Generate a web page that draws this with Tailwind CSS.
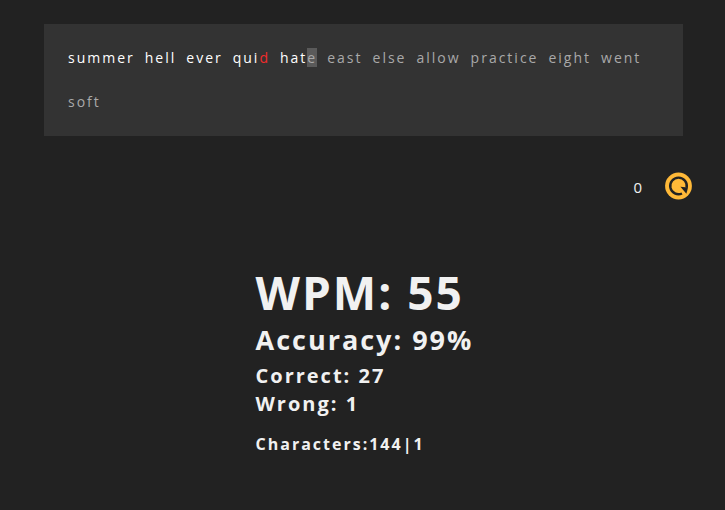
<!DOCTYPE html>
<html lang="en">
<head>
<meta charset="utf-8">
<meta name="viewport" content="width=device-width, initial-scale=1">
<title>Typing test</title>
<script src="https://cdn.jsdelivr.net/npm/@tailwindcss/browser@4"></script>
</head>
<body class="min-h-screen bg-[#222222] font-['Open_Sans',sans-serif] text-[#f1f1f1]">
<main class="px-8 pt-6">
  <section aria-label="Words to type" class="mr-[10px] ml-3 flex flex-wrap gap-x-[10px] bg-[#333333] px-6 py-3 text-[14px] leading-[44px] tracking-[2px] text-[#a9a9a9]">
    <span class="text-white">summer</span>
    <span class="text-white">hell</span>
    <span class="text-white">ever</span>
    <span class="text-white">qui<span class="text-[#f02b2b]">d</span></span>
    <span class="text-white">hat<span class="bg-[#5a5a5a] text-[#a9a9a9]">e</span></span>
    <span>east</span>
    <span>else</span>
    <span>allow</span>
    <span>practice</span>
    <span>eight</span>
    <span>went</span>
    <span>soft</span>
  </section>
  <div class="mt-9 mr-px flex h-7 items-center justify-end gap-[22px]">
    <span class="pt-[2px] text-[15px]">0</span>
    <button type="button" aria-label="Restart" class="size-7 cursor-pointer">
      <svg viewBox="0 0 28 28" class="size-7" aria-hidden="true">
        <circle cx="14.5" cy="14" r="13.4" fill="#ffb938"/>
        <path d="M22.6 15.8A8.3 8.3 0 1 0 18 21.5" fill="none" stroke="#222222" stroke-width="2.4"/>
        <path d="M16.4 14.8L24 15.4L22.4 21.8Z" fill="#222222"/>
      </svg>
    </button>
  </div>
  <section aria-label="Results" class="mx-auto mt-[62px] w-[214px] font-bold tracking-[2px] whitespace-nowrap">
    <h1 class="text-[46px] leading-[60px]">WPM: 55</h1>
    <h2 class="text-[27px] leading-9">Accuracy: 99%</h2>
    <p class="mt-1 text-[20px] leading-7">Correct: 27</p>
    <p class="text-[20px] leading-7">Wrong: 1</p>
    <p class="mt-[14px] text-[16px] leading-6">Characters:144|1</p>
  </section>
</main>
</body>
</html>
